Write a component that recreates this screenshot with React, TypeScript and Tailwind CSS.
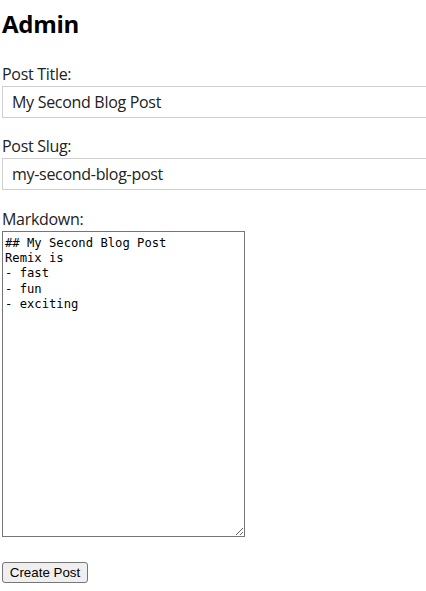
import React from 'react'

const md = `## My Second Blog Post
Remix is
- fast
- fun
- exciting`

export default function App() {
  return (
    <div className="min-h-[591px] w-[426px] overflow-hidden bg-white px-[2px] text-black font-['Open_Sans',sans-serif]">
      <h1 className="pt-[8px] text-[24px] leading-[32px] font-bold tracking-[-0.3px]">Admin</h1>

      <form className="mt-[22px]">
        {/* Title */}
        <div>
          <label className="block text-[16px] leading-[24px] tracking-[-0.3px] text-[#222]">Post Title:</label>
          <input
            defaultValue="My Second Blog Post"
            className="block h-[32px] w-[460px] border border-[#cfcfcf] px-[9px] text-[16px] tracking-[-0.3px] text-[#222] outline-none"
          />
        </div>

        {/* Slug */}
        <div className="mt-[16px]">
          <label className="block text-[16px] leading-[24px] tracking-[-0.3px] text-[#222]">Post Slug:</label>
          <input
            defaultValue="my-second-blog-post"
            className="block h-[32px] w-[460px] border border-[#cfcfcf] px-[9px] text-[16px] tracking-[-0.3px] text-[#222] outline-none"
          />
        </div>

        {/* Markdown */}
        <div className="mt-[17px]">
          <label className="block text-[16px] leading-[24px] tracking-[-0.3px] text-[#222]">Markdown:</label>
          <textarea
            defaultValue={md}
            className="block h-[306px] w-[243px] border border-[#767676] px-[2px] pt-[4px] pb-[2px] font-['DejaVu_Sans_Mono',monospace] text-[12.2px] leading-[15.2px] text-black outline-none"
          />
        </div>

        <div className="mt-[25px] flex">
          <button
            type="button"
            className="h-[21px] w-[86px] rounded-[3px] border border-[#767676] bg-[#efefef] font-['Liberation_Sans',sans-serif] text-[13.33px] leading-none text-black"
          >
            Create Post
          </button>
        </div>
      </form>
    </div>
  )
}
